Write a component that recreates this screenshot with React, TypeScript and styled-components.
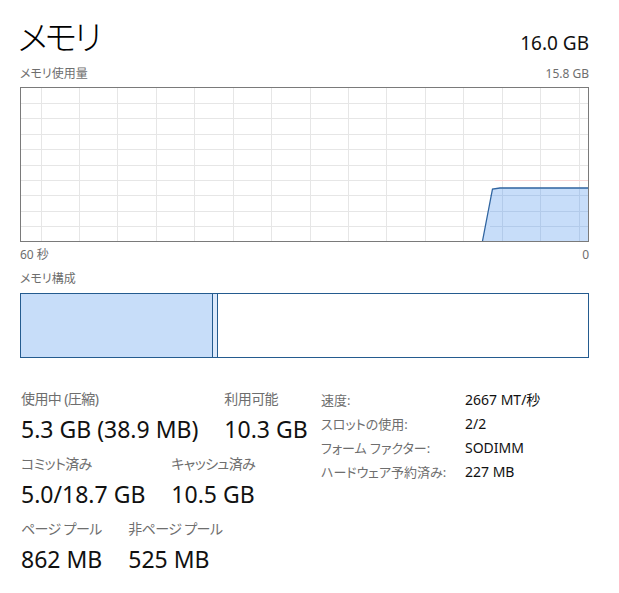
import React from "react";
import styled, { createGlobalStyle } from "styled-components";

const GlobalStyle = createGlobalStyle`
  html, body {
    margin: 0;
    padding: 0;
    background: #ffffff;
  }
  body {
    font-family: "Noto Sans", "Noto Sans CJK JP", sans-serif;
    font-feature-settings: "palt";
    color: #000000;
  }
`;

const Page = styled.div`
  width: 569px;
  padding: 14px 0 0 20px;
`;

const Header = styled.div`
  display: flex;
  justify-content: space-between;
  align-items: baseline;
`;

const Title = styled.h1`
  margin: 0 0 0 -2px;
  font-family: "Noto Sans CJK JP", sans-serif;
  font-weight: 300;
  font-size: 34px;
  line-height: 44px;
  letter-spacing: -3px;
  font-feature-settings: "palt";
`;

const Total = styled.div`
  font-size: 19px;
  line-height: 24px;
  color: #111;
`;

const Caption = styled.div<{ $top?: number }>`
  display: flex;
  justify-content: space-between;
  margin-top: ${(p) => p.$top ?? 0}px;
  font-size: 12px;
  line-height: 16px;
  color: #6e6e6e;
`;

const ChartBox = styled.svg`
  display: block;
  margin-top: 5px;
`;

const Bar = styled.div`
  display: flex;
  height: 63px;
  margin-top: 6px;
  border: 1px solid #245b8f;
`;

const Segment = styled.div<{ $width: number; $fill: string }>`
  width: ${(p) => p.$width}px;
  background: ${(p) => p.$fill};
  border-right: 1px solid #245b8f;
`;

const Stats = styled.div`
  display: flex;
  margin-top: 29px;
`;

const LeftStats = styled.div`
  width: 301px;
  padding-top: 3px;
  display: flex;
  flex-direction: column;
  gap: 11px;
`;

const StatRow = styled.div`
  display: flex;
  gap: 26px;
  padding-left: 1px;
`;

const Stat = styled.div`
  display: flex;
  flex-direction: column;
  gap: 6px;
`;

const StatLabel = styled.div`
  font-size: 14px;
  line-height: 18px;
  letter-spacing: -0.6px;
  color: #6e6e6e;
  white-space: nowrap;
`;

const StatValue = styled.div`
  font-size: 23px;
  line-height: 30px;
  color: #111;
  white-space: nowrap;
`;

const Specs = styled.div`
  display: grid;
  grid-template-columns: 144px auto;
  grid-auto-rows: 24px;
  align-items: center;
`;

const SpecLabel = styled.div`
  font-size: 13px;
  color: #6e6e6e;
  white-space: nowrap;
`;

const SpecValue = styled.div`
  font-size: 14px;
  color: #111;
  white-space: nowrap;
`;

const W = 569;
const H = 155;

function UsageChart() {
  const cols = Array.from({ length: 15 }, (_, i) => 20.5 + i * 38.43);
  const rows = Array.from({ length: 9 }, (_, i) => 16 + i * 15.4);
  return (
    <ChartBox width={W} height={H} viewBox={`0 0 ${W} ${H}`}>
      <rect x={0} y={0} width={W} height={H} fill="#fff" />
      {cols.map((x) => (
        <line key={`c${x}`} x1={Math.round(x) + 0.5} y1={1} x2={Math.round(x) + 0.5} y2={H - 1} stroke="#e6e6e6" />
      ))}
      {rows.map((y) => (
        <line key={`r${y}`} x1={1} y1={Math.round(y) + 0.5} x2={W - 1} y2={Math.round(y) + 0.5} stroke="#e6e6e6" />
      ))}
      <line x1={475} y1={93.5} x2={W - 1} y2={93.5} stroke="#f6d6d6" />
      <polygon points="462.5,154 472.5,102 480,101 568,101 568,154" fill="#c7ddf9" />
      {cols
        .filter((x) => x > 472)
        .map((x) => (
          <line key={`fc${x}`} x1={Math.round(x) + 0.5} y1={102} x2={Math.round(x) + 0.5} y2={H - 1} stroke="#b3cbea" />
        ))}
      {rows
        .filter((y) => y > 102)
        .map((y) => (
          <line key={`fr${y}`} x1={470} y1={Math.round(y) + 0.5} x2={W - 1} y2={Math.round(y) + 0.5} stroke="#b3cbea" />
        ))}
      <polyline points="462.5,154 472.5,102 480,101 568,101" fill="none" stroke="#2f64a0" strokeWidth={1.3} />
      <rect x={0.5} y={0.5} width={W - 1} height={H - 1} fill="none" stroke="#7a7a7a" />
    </ChartBox>
  );
}

const leftRows = [
  [
    { label: "使用中 (圧縮)", value: "5.3 GB (38.9 MB)" },
    { label: "利用可能", value: "10.3 GB" },
  ],
  [
    { label: "コミット済み", value: "5.0/18.7 GB" },
    { label: "キャッシュ済み", value: "10.5 GB" },
  ],
  [
    { label: "ページ プール", value: "862 MB" },
    { label: "非ページ プール", value: "525 MB" },
  ],
];

const specs = [
  ["速度:", "2667 MT/秒"],
  ["スロットの使用:", "2/2"],
  ["フォーム ファクター:", "SODIMM"],
  ["ハードウェア予約済み:", "227 MB"],
];

export default function App() {
  return (
    <>
      <GlobalStyle />
      <Page>
        <Header>
          <Title>メモリ</Title>
          <Total>16.0 GB</Total>
        </Header>
        <Caption $top={8}>
          <span>メモリ使用量</span>
          <span>15.8 GB</span>
        </Caption>
        <UsageChart />
        <Caption $top={5}>
          <span>60 秒</span>
          <span>0</span>
        </Caption>
        <Caption $top={8}>
          <span>メモリ構成</span>
        </Caption>
        <Bar>
          <Segment $width={191} $fill="#c7ddf9" />
          <Segment $width={4} $fill="#dce9fb" />
        </Bar>
        <Stats>
          <LeftStats>
            {leftRows.map((row, i) => (
              <StatRow key={i}>
                {row.map((s) => (
                  <Stat key={s.label}>
                    <StatLabel>{s.label}</StatLabel>
                    <StatValue>{s.value}</StatValue>
                  </Stat>
                ))}
              </StatRow>
            ))}
          </LeftStats>
          <Specs>
            {specs.map(([l, v]) => (
              <React.Fragment key={l}>
                <SpecLabel>{l}</SpecLabel>
                <SpecValue>{v}</SpecValue>
              </React.Fragment>
            ))}
          </Specs>
        </Stats>
      </Page>
    </>
  );
}
